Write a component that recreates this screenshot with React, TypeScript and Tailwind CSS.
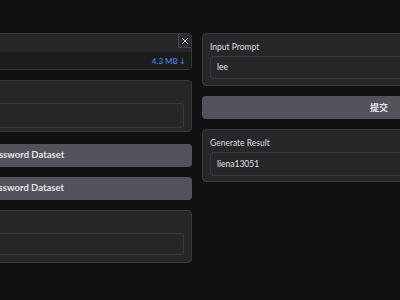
import React from "react";

const font = { fontFamily: "Lato, 'Noto Sans CJK SC', sans-serif" };

export default function App() {
  return (
    <div className="w-[400px] h-[300px] overflow-hidden bg-[#111113]" style={font}>
      <div className="flex gap-[10px] pt-[33px] -ml-[162px] w-[718px]">
        {/* left column */}
        <div className="w-[354px] flex flex-col">
          <div className="h-[37px] rounded-[4px] border border-[#38383d] bg-[#27272a] flex flex-col overflow-hidden">
            <div className="h-[18px] flex justify-end">
              <div className="w-[14px] h-[15px] -mt-px -mr-px border border-[#45454b] bg-[#2d2d31] flex items-center justify-center">
                <svg width="8" height="8" viewBox="0 0 8 8">
                  <path d="M1 1L7 7M7 1L1 7" stroke="#c8c8cc" strokeWidth="1" />
                </svg>
              </div>
            </div>
            <div className="flex-1 bg-[#1c1c1f] flex items-center justify-end pr-[6px] text-[8px] font-semibold text-[#4d7fe0]">
              4.3 MB<span className="ml-[2px] text-[7px]">↓</span>
            </div>
          </div>
          <div className="mt-[10px] h-[52px] rounded-[4px] border border-[#38383d] bg-[#27272a] flex flex-col justify-end pr-[7px] pl-[7px] pb-[3px]">
            <div className="h-[25px] rounded-[3px] border border-[#3a3a3f] bg-[#27272a]" />
          </div>
          <button className="mt-[12px] h-[23px] rounded-[4px] bg-[#52525b] text-[9.5px] font-bold text-[#e4e4e7]">
            Load Password Dataset
          </button>
          <button className="mt-[10px] h-[23px] rounded-[4px] bg-[#52525b] text-[9.5px] font-bold text-[#e4e4e7]">
            Save Password Dataset
          </button>
          <div className="mt-[10px] h-[53px] rounded-[4px] border border-[#38383d] bg-[#27272a] flex flex-col justify-end px-[7px] pb-[7px]">
            <div className="h-[22px] rounded-[3px] border border-[#3a3a3f] bg-[#27272a]" />
          </div>
        </div>
        {/* right column */}
        <div className="w-[354px] flex flex-col">
          <div className="h-[53px] rounded-[4px] border border-[#38383d] bg-[#27272a] flex flex-col px-[7px] pt-[6px]">
            <div className="h-[14px] text-[8.5px] leading-[14px] text-[#dcdce0]">Input Prompt</div>
            <div className="mt-[2px] h-[23px] rounded-[3px] border border-[#3a3a3f] bg-[#27272a] px-[6px] flex items-center text-[8.5px] text-[#e4e4e7]">
              lee
            </div>
          </div>
          <button className="mt-[10px] h-[23px] rounded-[4px] bg-[#52525b] text-[9px] font-bold text-[#e4e4e7]">
            提交
          </button>
          <div className="mt-[10px] h-[53px] rounded-[4px] border border-[#38383d] bg-[#27272a] flex flex-col px-[7px] pt-[6px]">
            <div className="h-[14px] text-[8.5px] leading-[14px] text-[#dcdce0]">Generate Result</div>
            <div className="mt-[2px] h-[24px] rounded-[3px] border border-[#3a3a3f] bg-[#27272a] px-[6px] flex items-center text-[8.5px] text-[#e4e4e7]">
              liena13051
            </div>
          </div>
        </div>
      </div>
    </div>
  );
}
